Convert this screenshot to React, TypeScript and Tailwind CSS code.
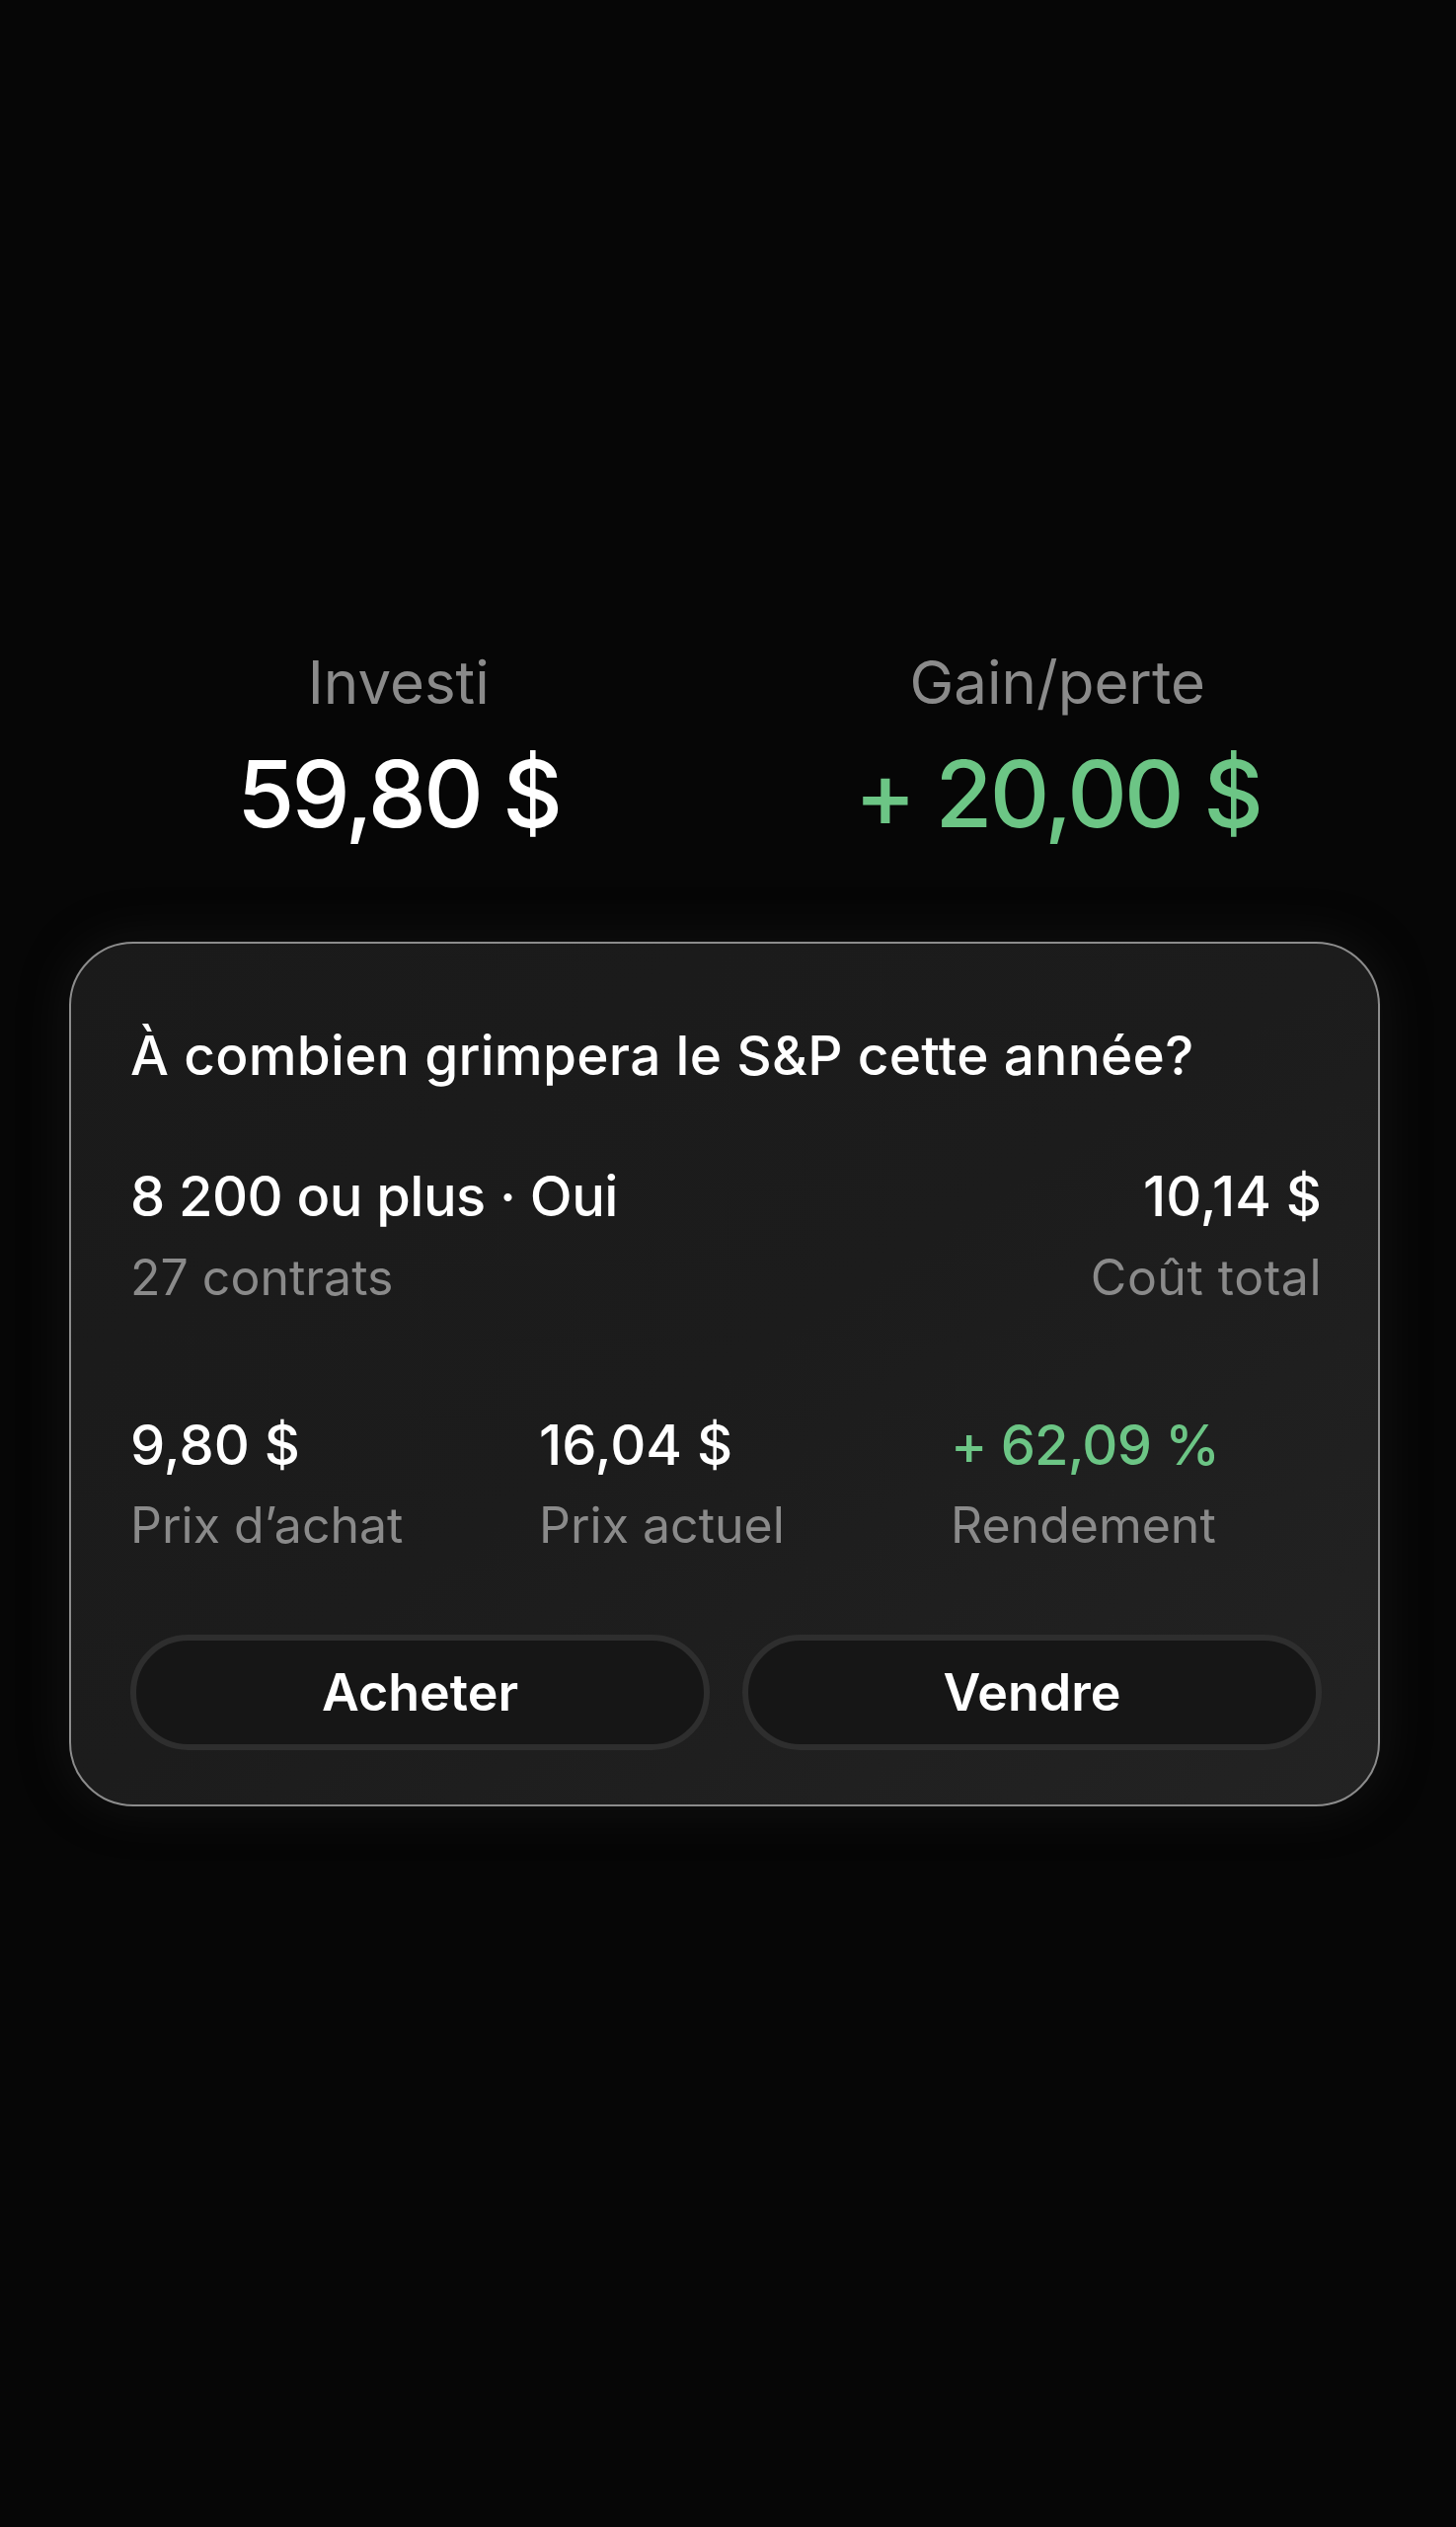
import React from "react";

const font = { fontFamily: "Inter, 'Noto Sans', sans-serif" };

function Stat({ label, value, positive }: { label: string; value: string; positive?: boolean }) {
  return (
    <div className="flex flex-col items-center">
      <div className="text-[60px] leading-[70px] text-[#8a8a8a]">{label}</div>
      <div
        className={
          "mt-[22px] text-[94px] leading-[113px] font-medium tracking-[-0.03em] " +
          (positive ? "text-[#6cc585]" : "text-white")
        }
      >
        {value}
      </div>
    </div>
  );
}

function Metric({ value, label, green }: { value: string; label: string; green?: boolean }) {
  return (
    <div className="flex flex-col">
      <div
        className={
          "text-[56px] leading-[65px] font-medium " +
          (green ? "text-[#6cc585] tracking-[-0.015em]" : "text-white")
        }
      >
        {value}
      </div>
      <div className="mt-[19px] text-[50px] leading-[58px] text-[#8a8a8a]">{label}</div>
    </div>
  );
}

export default function App() {
  return (
    <div className="min-h-[2560px] w-full bg-[#060606] pt-[656px]" style={font}>
      <div className="mx-[70px] grid grid-cols-2">
        <Stat label="Investi" value="59,80 $" />
        <Stat label="Gain/perte" value="+ 20,00 $" positive />
      </div>

      <div className="ml-[70px] mr-[77px] mt-[93px] rounded-[65px] border-2 border-[#8c8c8c] bg-gradient-to-br from-[#1a1a1a] via-[#1c1c1c] to-[#232323] pl-[60px] pr-[57px] pt-[81px] pb-[55px] shadow-[0_0_50px_rgba(36,36,36,0.45)]">
        <div className="text-[55px] leading-[65px] font-medium text-white tracking-[0.005em]">
          À combien grimpera le S&amp;P cette année?
        </div>

        <div className="mt-[78px] flex justify-between">
          <div className="flex flex-col">
            <div className="text-[56px] leading-[65px] font-medium text-white tracking-[-0.01em]">
              8 200 ou plus · Oui
            </div>
            <div className="mt-[20px] text-[50px] leading-[58px] text-[#8a8a8a]">27 contrats</div>
          </div>
          <div className="flex flex-col items-end">
            <div className="text-[56px] leading-[65px] font-medium text-white">10,14 $</div>
            <div className="mt-[20px] text-[50px] leading-[58px] text-[#8a8a8a] tracking-[0.01em]">Coût total</div>
          </div>
        </div>

        <div className="mt-[109px] grid grid-cols-[414px_417px_1fr]">
          <Metric value="9,80 $" label="Prix d’achat" />
          <Metric value="16,04 $" label="Prix actuel" />
          <Metric value="+ 62,09 %" label="Rendement" green />
        </div>

        <div className="mt-[82px] flex gap-[33px]">
          <button className="h-[117px] flex-1 rounded-full border-[6px] border-[#2e2e2e] bg-[#161616] text-[52px] font-semibold text-white">
            Acheter
          </button>
          <button className="h-[117px] flex-1 rounded-full border-[6px] border-[#2e2e2e] bg-[#161616] text-[52px] font-semibold text-white">
            Vendre
          </button>
        </div>
      </div>
    </div>
  );
}
